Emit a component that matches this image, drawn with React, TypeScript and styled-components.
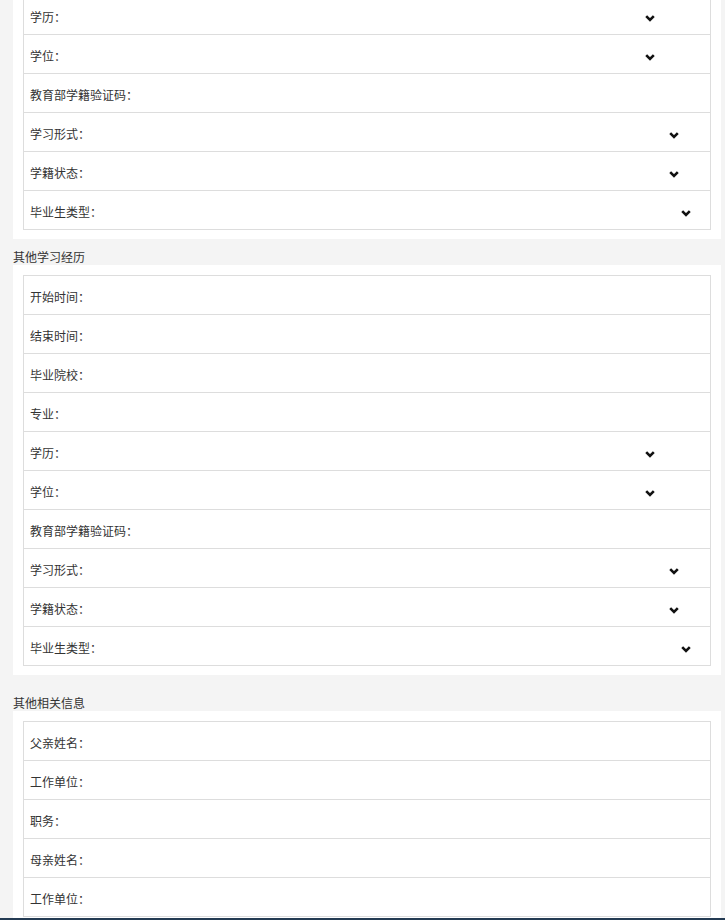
import styled, { createGlobalStyle } from "styled-components";

type Field = { label: string; select?: boolean };

const firstSection: Field[] = [
  { label: "学历", select: true },
  { label: "学位", select: true },
  { label: "教育部学籍验证码" },
  { label: "学习形式", select: true },
  { label: "学籍状态", select: true },
  { label: "毕业生类型", select: true },
];

const otherStudy: Field[] = [
  { label: "开始时间" },
  { label: "结束时间" },
  { label: "毕业院校" },
  { label: "专业" },
  ...firstSection,
];

const otherInfo: Field[] = [
  { label: "父亲姓名" },
  { label: "工作单位" },
  { label: "职务" },
  { label: "母亲姓名" },
  { label: "工作单位" },
];

function Chevron() {
  return (
    <svg width="10" height="7" viewBox="0 0 10 7">
      <polyline
        points="1.2,1.2 5,5 8.8,1.2"
        fill="none"
        stroke="#111"
        strokeWidth="2.6"
      />
    </svg>
  );
}

function FieldList({ fields }: { fields: Field[] }) {
  return (
    <>
      {fields.map((f, i) => (
        <Row key={i}>
          <Label>{f.label}：</Label>
          {f.select && (
            <Select>
              <Chevron />
            </Select>
          )}
        </Row>
      ))}
    </>
  );
}

export default function App() {
  return (
    <Page>
      <GlobalStyle />
      <Panel $first>
        <Box $open>
          <FieldList fields={firstSection} />
        </Box>
      </Panel>

      <SectionTitle>其他学习经历</SectionTitle>
      <Panel>
        <Box>
          <FieldList fields={otherStudy} />
        </Box>
      </Panel>

      <SectionTitle $spaced>其他相关信息</SectionTitle>
      <Panel>
        <Box>
          <FieldList fields={otherInfo} />
        </Box>
      </Panel>

      <BottomBar />
    </Page>
  );
}

const GlobalStyle = createGlobalStyle`
  body {
    margin: 0;
    background: #f4f4f4;
    font-family: "Noto Sans CJK SC", "Noto Sans", sans-serif;
    color: #333;
  }
`;

const Page = styled.div`
  margin-top: -4px;
  padding: 0 4px 0 13px;
`;

const Panel = styled.div<{ $first?: boolean }>`
  background: #fff;
  padding: ${(p) => (p.$first ? "0" : "10px")} 10px 9px;
`;

const Box = styled.div<{ $open?: boolean }>`
  border: 1px solid #ddd;
  border-top: ${(p) => (p.$open ? "none" : "1px solid #ddd")};
`;

const Row = styled.div`
  display: flex;
  align-items: center;
  height: 38px;
  padding-left: 6px;
  border-bottom: 1px solid #ddd;

  &:last-child {
    border-bottom: none;
  }
`;

const Label = styled.span`
  flex: none;
  font-size: 12px;
  line-height: 16px;
  color: #333;
  padding-top: 3px;
`;

const Select = styled.div`
  flex: none;
  width: 600px;
  padding-right: 11px;
  box-sizing: border-box;
  display: flex;
  justify-content: flex-end;
  padding-top: 6px;
`;

const SectionTitle = styled.div<{ $spaced?: boolean }>`
  margin-top: ${(p) => (p.$spaced ? "10px" : "0")};
  padding-top: 10px;
  font-size: 12px;
  line-height: 16px;
  color: #333;
`;

const BottomBar = styled.div`
  position: fixed;
  left: 0;
  right: 0;
  bottom: 0;
  height: 2px;
  background: #243b53;
`;
